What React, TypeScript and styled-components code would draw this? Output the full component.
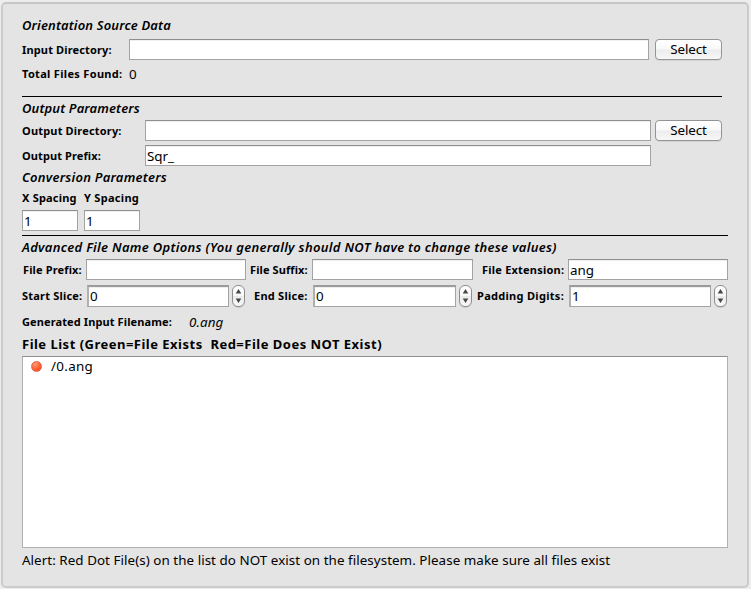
import React from 'react';
import styled, { createGlobalStyle } from 'styled-components';

const GlobalStyle = createGlobalStyle`
  * { box-sizing: border-box; }
  html, body { margin: 0; background: #ededed; }
  body { overflow: hidden; color: #000; font: 13.4px/16px "Noto Sans", "Open Sans", sans-serif; }
`;

const Page = styled.main`
  width: 751px;
  height: 589px;
  padding: 2px 2px 1px 1px;
`;

const Panel = styled.section`
  display: flex;
  flex-direction: column;
  width: 748px;
  height: 586px;
  padding: 12px 19px 0;
  border: 2px solid #cbcbcb;
  border-top-color: #c6c6c6;
  border-radius: 5px;
  background: #e4e4e4;
`;

const Row = styled.div<{ $h: number; $top?: number }>`
  display: flex;
  align-items: center;
  flex: none;
  height: ${p => p.$h}px;
  margin-top: ${p => p.$top ?? 0}px;
  white-space: pre;
`;

const Heading = styled.h2<{ $ls: number }>`
  margin: 0;
  padding-bottom: 2px;
  font-size: 13px;
  line-height: 16px;
  font-weight: 600;
  font-style: italic;
  letter-spacing: ${p => p.$ls}px;
`;

const ListTitle = styled.h2`
  margin: 0;
  padding-bottom: 2px;
  font-size: 13px;
  line-height: 16px;
  font-weight: 700;
  letter-spacing: 0.49px;
`;

const Label = styled.label<{ $w: number; $ls: number; $indent?: number }>`
  flex: none;
  width: ${p => p.$w}px;
  padding-left: ${p => p.$indent ?? 0}px;
  font-size: 11px;
  font-weight: 700;
  letter-spacing: ${p => p.$ls}px;
`;

const ColumnLabel = styled(Label)`
  padding-bottom: 2px;
`;

const Value = styled.span<{ $italic?: boolean; $ls?: number }>`
  font-style: ${p => (p.$italic ? 'italic' : 'normal')};
  letter-spacing: ${p => p.$ls ?? 0}px;
`;

const Alert = styled.p`
  margin: 0;
  padding-bottom: 2px;
  letter-spacing: 0.05px;
`;

const Field = styled.input<{ $w: number; $h?: number; $pad?: number }>`
  flex: none;
  width: ${p => p.$w}px;
  height: ${p => p.$h ?? 21}px;
  margin: 0;
  padding: 0 2px 0 ${p => p.$pad ?? 1}px;
  border: 1px solid #a3a3a3;
  border-top-color: #8f8f8f;
  border-radius: 0;
  background: #fff;
  box-shadow: inset 0 1px 0 #efefef;
  color: #000;
  font: inherit;
  letter-spacing: 0;
  outline: none;
`;

const Numeric = styled(Field)`
  padding-right: 2px;
  padding-left: 1px;
  border-width: 2px 1px 1px 2px;
  border-color: #9b9b9b #a3a3a3 #a3a3a3 #b0b0b0;
  padding-bottom: 1px;
`;

const SelectButton = styled.button<{ $gap: number }>`
  width: 67px;
  height: 21px;
  margin: 0 0 0 ${p => p.$gap}px;
  padding: 0 0 1px;
  border: 1px solid #949494;
  border-radius: 4px;
  background: linear-gradient(#fff 0%, #f9f9f9 48%, #ececec 52%, #f7f7f7 100%);
  box-shadow: 0 1px 0 #d4d4d4;
  color: #000;
  font: inherit;
  line-height: 18px;
  letter-spacing: -0.15px;
`;

const Divider = styled.hr<{ $w: number; $top: number }>`
  flex: none;
  width: ${p => p.$w}px;
  height: 1px;
  margin: ${p => p.$top}px 0 0;
  border: 0;
  background: #000;
`;

const StepperBox = styled.span<{ $gap: number }>`
  display: flex;
  flex: none;
  align-items: center;
  justify-content: center;
  width: 13px;
  height: 22px;
  margin-left: ${p => p.$gap}px;
  border: 1px solid #8e8e8e;
  border-radius: 6px;
  background: linear-gradient(#fff 0%, #f8f8f8 48%, #ebebeb 52%, #fafafa 100%);
  box-shadow: 0 1px 0 #cacaca;
`;

const FileList = styled.ul`
  flex: none;
  width: 706px;
  height: 192px;
  margin: 4px 0 0;
  padding: 0 8px;
  list-style: none;
  border: 1px solid #b0b0b0;
  border-top-color: #8f8f8f;
  background: #fff;
`;

const FileItem = styled.li`
  display: flex;
  align-items: center;
  gap: 9px;
  height: 18px;
  letter-spacing: 0.3px;
`;

const StatusDot = styled.span`
  width: 11px;
  height: 11px;
  border: 1px solid #e0694a;
  border-radius: 50%;
  background: radial-gradient(circle at 35% 25%, #ff9a76 0%, #ff683c 45%, #f93a10 100%);
`;

function Stepper({ gap }: { gap: number }) {
  return (
    <StepperBox $gap={gap}>
      <svg width="11" height="20" viewBox="0 0 11 20" fill="#484848">
        <path d="M5.5 3L8.3 7.4H2.7zM5.5 17L8.3 12.6H2.7z" />
      </svg>
    </StepperBox>
  );
}

export default function App() {
  return (
    <>
      <GlobalStyle />
      <Page>
        <Panel>
          <Row $h={20}><Heading $ls={0.15}>Orientation Source Data</Heading></Row>
          <Row $h={21} $top={3}>
            <Label $w={107} $ls={0.15}>Input Directory:</Label>
            <Field $w={520} />
            <SelectButton $gap={6}>Select</SelectButton>
          </Row>
          <Row $h={28}>
            <Label $w={107} $ls={0.32}>Total Files Found:</Label>
            <Value>0</Value>
          </Row>
          <Divider $w={700} $top={8} />
          <Row $h={23}><Heading $ls={0.13}>Output Parameters</Heading></Row>
          <Row $h={21}>
            <Label $w={123} $ls={0.18}>Output Directory:</Label>
            <Field $w={506} />
            <SelectButton $gap={4}>Select</SelectButton>
          </Row>
          <Row $h={21} $top={4}>
            <Label $w={123} $ls={0.1}>Output Prefix:</Label>
            <Field $w={506} defaultValue="Sqr_" />
          </Row>
          <Row $h={24}><Heading $ls={0.24}>Conversion Parameters</Heading></Row>
          <Row $h={17}>
            <ColumnLabel $w={62} $ls={0.2}>X Spacing</ColumnLabel>
            <ColumnLabel $w={62} $ls={0.3}>Y Spacing</ColumnLabel>
          </Row>
          <Row $h={21} $top={3}>
            <Field $w={56} defaultValue="1" />
            <Label $w={6} $ls={0} />
            <Field $w={56} defaultValue="1" />
          </Row>
          <Divider $w={706} $top={4} />
          <Row $h={23}>
            <Heading $ls={0.31}>
              Advanced File Name Options (You generally should NOT have to change these values)
            </Heading>
          </Row>
          <Row $h={21}>
            <Label $w={64} $indent={1} $ls={0.14}>File Prefix:</Label>
            <Field $w={160} />
            <Label $w={66} $indent={4} $ls={0.1}>File Suffix:</Label>
            <Field $w={161} />
            <Label $w={95} $indent={9} $ls={0.22}>File Extension:</Label>
            <Field $w={160} defaultValue="ang" />
          </Row>
          <Row $h={22} $top={5}>
            <Label $w={65} $ls={0.2}>Start Slice:</Label>
            <Numeric $w={142} $h={22} defaultValue="0" />
            <Stepper gap={3} />
            <Label $w={68} $indent={9} $ls={0.25}>End Slice:</Label>
            <Numeric $w={143} $h={22} defaultValue="0" />
            <Stepper gap={3} />
            <Label $w={97} $indent={5} $ls={0.3}>Padding Digits:</Label>
            <Numeric $w={142} $h={22} defaultValue="1" />
            <Stepper gap={3} />
          </Row>
          <Row $h={30}>
            <Label $w={167} $ls={0.11}>Generated Input Filename:</Label>
            <Value $italic $ls={0.1}>0.ang</Value>
          </Row>
          <Row $h={15}>
            <ListTitle>{'File List (Green=File Exists  Red=File Does NOT Exist)'}</ListTitle>
          </Row>
          <FileList>
            <FileItem><StatusDot />/0.ang</FileItem>
          </FileList>
          <Row $h={25}>
            <Alert>
              Alert: Red Dot File(s) on the list do NOT exist on the filesystem. Please make sure all files exist
            </Alert>
          </Row>
        </Panel>
      </Page>
    </>
  );
}
